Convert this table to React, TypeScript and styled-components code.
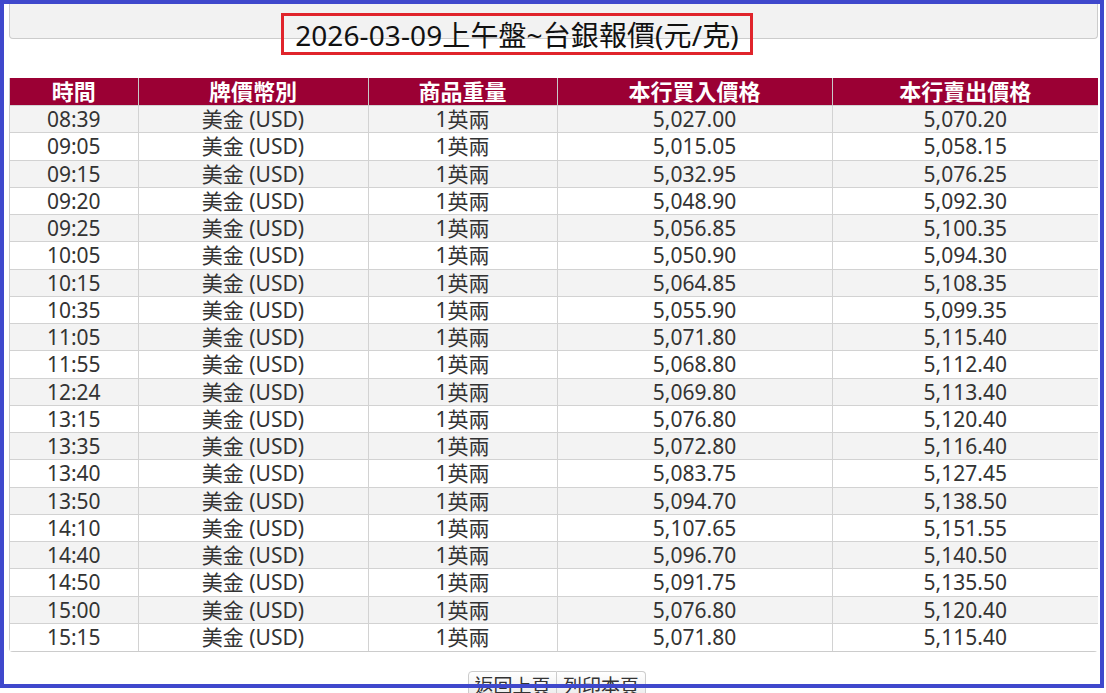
import React from "react";
import styled, { createGlobalStyle } from "styled-components";

const GlobalStyle = createGlobalStyle`
  html, body { margin: 0; padding: 0; background: #ffffff; }
  body {
    font-family: "Noto Sans", "Noto Sans CJK TC", sans-serif;
    color: #333333;
    overflow: hidden;
  }
`;

const Page = styled.div`
  padding: 0 8px 0 9px;
`;

const Header = styled.div`
  position: relative;
  height: 39px;
`;

const Bar = styled.div`
  box-sizing: border-box;
  height: 39px;
  background: #f2f2f2;
  border: 1px solid #cccccc;
  border-top: none;
  border-radius: 0 0 4px 4px;
`;

const TitleBox = styled.h1`
  position: absolute;
  left: 272px;
  top: 13px;
  box-sizing: border-box;
  width: 472px;
  height: 42px;
  margin: 0;
  border: 3px solid #e0242b;
  display: flex;
  align-items: center;
  justify-content: center;
  font-family: "Noto Sans", "Noto Sans CJK TC", sans-serif;
  font-weight: 400;
  font-size: 28px;
  letter-spacing: 0.1px;
  color: #111111;
  white-space: nowrap;
`;

const TableWrap = styled.div`
  margin-top: 39px;
  border: 1px solid #cccccc;
  border-top: none;
  border-right: none;
  border-radius: 0 0 4px 4px;
`;

const Table = styled.table`
  width: 100%;
  border-collapse: collapse;
  table-layout: fixed;
`;

const HeadCell = styled.th`
  height: 27px;
  padding: 0;
  background: #9b0034;
  color: #ffffff;
  font-weight: 700;
  font-size: 22px;
  line-height: 27px;
  text-align: center;
  border-left: 1px solid #c9c9c9;
  &:first-child { border-left: none; }
`;

const Row = styled.tr<{ $odd: boolean }>`
  background: ${(p) => (p.$odd ? "#f3f3f3" : "#ffffff")};
`;

const Cell = styled.td`
  height: 27.25px;
  padding: 0;
  box-sizing: border-box;
  font-size: 21px;
  line-height: 26px;
  text-align: center;
  color: #333333;
  border-left: 1px solid #d2d2d2;
  border-top: 1px solid #d2d2d2;
  &:first-child { border-left: none; }
`;

const ButtonGroup = styled.div`
  display: flex;
  justify-content: center;
  margin-top: 19px;
  padding-left: 7px;
`;

const Button = styled.button<{ $first?: boolean }>`
  box-sizing: border-box;
  width: 89px;
  height: 30px;
  padding: 0;
  font-family: "Noto Sans", "Noto Sans CJK TC", sans-serif;
  font-size: 19px;
  line-height: 28px;
  color: #333333;
  background: linear-gradient(#ffffff, #e8e8e8);
  border: 1px solid #cccccc;
  border-left: ${(p) => (p.$first ? "1px solid #cccccc" : "none")};
  border-radius: ${(p) => (p.$first ? "4px 0 0 4px" : "0 4px 4px 0")};
`;

const Frame = styled.div`
  position: fixed;
  left: 0;
  top: 0;
  width: 1104px;
  height: 688px;
  box-sizing: border-box;
  border: 4px solid #3f48cc;
  pointer-events: none;
  z-index: 10;
`;

const rows: [string, string, string][] = [
  ["08:39", "5,027.00", "5,070.20"],
  ["09:05", "5,015.05", "5,058.15"],
  ["09:15", "5,032.95", "5,076.25"],
  ["09:20", "5,048.90", "5,092.30"],
  ["09:25", "5,056.85", "5,100.35"],
  ["10:05", "5,050.90", "5,094.30"],
  ["10:15", "5,064.85", "5,108.35"],
  ["10:35", "5,055.90", "5,099.35"],
  ["11:05", "5,071.80", "5,115.40"],
  ["11:55", "5,068.80", "5,112.40"],
  ["12:24", "5,069.80", "5,113.40"],
  ["13:15", "5,076.80", "5,120.40"],
  ["13:35", "5,072.80", "5,116.40"],
  ["13:40", "5,083.75", "5,127.45"],
  ["13:50", "5,094.70", "5,138.50"],
  ["14:10", "5,107.65", "5,151.55"],
  ["14:40", "5,096.70", "5,140.50"],
  ["14:50", "5,091.75", "5,135.50"],
  ["15:00", "5,076.80", "5,120.40"],
  ["15:15", "5,071.80", "5,115.40"],
];

export default function App() {
  return (
    <>
      <GlobalStyle />
      <Page>
        <Header>
          <Bar />
          <TitleBox>2026-03-09上午盤~台銀報價(元/克)</TitleBox>
        </Header>
        <TableWrap>
          <Table>
            <colgroup>
              <col style={{ width: 128 }} />
              <col style={{ width: 230 }} />
              <col style={{ width: 189 }} />
              <col style={{ width: 275 }} />
              <col />
            </colgroup>
            <thead>
              <tr>
                <HeadCell>時間</HeadCell>
                <HeadCell>牌價幣別</HeadCell>
                <HeadCell>商品重量</HeadCell>
                <HeadCell>本行買入價格</HeadCell>
                <HeadCell>本行賣出價格</HeadCell>
              </tr>
            </thead>
            <tbody>
              {rows.map((r, i) => (
                <Row key={r[0]} $odd={i % 2 === 0}>
                  <Cell>{r[0]}</Cell>
                  <Cell>美金 (USD)</Cell>
                  <Cell>1英兩</Cell>
                  <Cell>{r[1]}</Cell>
                  <Cell>{r[2]}</Cell>
                </Row>
              ))}
            </tbody>
          </Table>
        </TableWrap>
        <ButtonGroup>
          <Button $first>返回上頁</Button>
          <Button>列印本頁</Button>
        </ButtonGroup>
      </Page>
      <Frame />
    </>
  );
}
